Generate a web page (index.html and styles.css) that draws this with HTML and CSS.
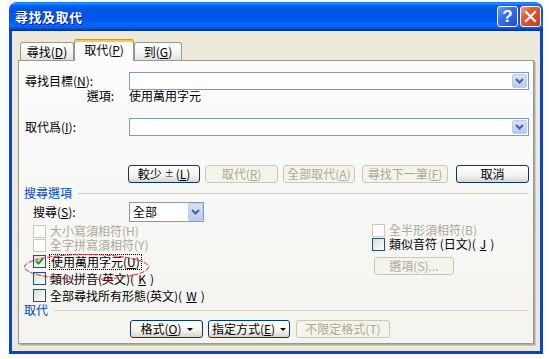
FILE: index.html
```html
<!DOCTYPE html>
<html>
<head>
    <meta charset="utf-8">
    <link rel="stylesheet" href="styles.css">
    <title>尋找及取代</title>
</head>
<body>
    <div class="window">
        <div class="titlebar">
            <span class="title">尋找及取代</span>
            <span class="cap-btn help">?</span>
            <span class="cap-btn close">
                <svg width="13" height="13" viewBox="0 0 13 13"><path d="M2 2 L11 11 M11 2 L2 11" stroke="#fff" stroke-width="2.2" stroke-linecap="square"/></svg>
            </span>
        </div>
        <div class="client">
            <div class="tabs">
                <div class="tab tab-find">尋找(<u>D</u>)</div>
                <div class="tab tab-active">取代(<u>P</u>)</div>
                <div class="tab tab-goto">到(<u>G</u>)</div>
            </div>
            <div class="panel">
                <div class="row row-combo">
                    <label class="label">尋找目標(<u>N</u>):</label>
                    <div class="combo">
                        <span class="drop-btn">
                            <svg width="9" height="6" viewBox="0 0 9 6"><path d="M1 1 L4.5 4.5 L8 1" fill="none" stroke="#4D6185" stroke-width="2"/></svg>
                        </span>
                    </div>
                </div>
                <div class="row row-info">
                    <span class="info-label">選項:</span>
                    <span>使用萬用字元</span>
                </div>
                <div class="row row-combo row-replace">
                    <label class="label">取代爲(<u>I</u>):</label>
                    <div class="combo">
                        <span class="drop-btn">
                            <svg width="9" height="6" viewBox="0 0 9 6"><path d="M1 1 L4.5 4.5 L8 1" fill="none" stroke="#4D6185" stroke-width="2"/></svg>
                        </span>
                    </div>
                </div>

                <div class="row row-buttons">
                    <button class="btn btn-less">較少 <span class="less-icon">±</span>(<u>L</u>)</button>
                    <button class="btn btn-replace" disabled>取代(<u>R</u>)</button>
                    <button class="btn btn-all" disabled>全部取代(<u>A</u>)</button>
                    <button class="btn btn-next" disabled>尋找下一筆(<u>F</u>)</button>
                    <button class="btn btn-cancel">取消</button>
                </div>

                <div class="group-title">搜尋選項</div>

                <div class="row row-search">
                    <label class="search-label">搜尋(<u>S</u>):</label>
                    <div class="select">
                        <span>全部</span>
                        <span class="drop-btn">
                            <svg width="9" height="6" viewBox="0 0 9 6"><path d="M1 1 L4.5 4.5 L8 1" fill="none" stroke="#4D6185" stroke-width="2"/></svg>
                        </span>
                    </div>
                </div>

                <div class="options">
                    <div class="col-left">
                        <div class="check check-tight disabled"><span class="box"></span>大小寫須相符(H)</div>
                        <div class="check check-tight disabled"><span class="box"></span>全字拼寫須相符(Y)</div>
                        <div class="check check-first">
                            <span class="box checked">
                                <svg width="11" height="11" viewBox="0 0 11 11"><path d="M2 5 L4.5 7.5 L9 2.5" fill="none" stroke="#21A121" stroke-width="2"/></svg>
                            </span>
                            <span class="focus">使用萬用字元(<u>U</u>)</span>
                        </div>
                        <div class="check"><span class="box"></span>類似拼音(英文)(<u>K</u>)</div>
                        <div class="check"><span class="box"></span>全部尋找所有形態(英文)(<u>W</u>)</div>
                    </div>
                    <div class="col-right">
                        <div class="check check-tight disabled"><span class="box"></span>全半形須相符(B)</div>
                        <div class="check check-tight"><span class="box"></span>類似音符 (日文)(<u>J</u>)</div>
                        <button class="btn btn-options" disabled>選項(S)...</button>
                    </div>
                </div>

                <div class="group-title group-replace">取代</div>

                <div class="row row-format">
                    <button class="btn btn-format">格式(<u>O</u>) <span class="caret"></span></button>
                    <button class="btn btn-special">指定方式(<u>E</u>) <span class="caret"></span></button>
                    <button class="btn btn-noformat" disabled>不限定格式(T)</button>
                </div>

                <svg class="mark" width="127" height="28" viewBox="0 0 127 28">
                    <ellipse cx="63.5" cy="14" rx="62" ry="12.5" fill="none" stroke="#E8202A" stroke-width="1" stroke-dasharray="5 1.5"/>
                </svg>
            </div>
        </div>
    </div>
</body>
</html>
```

FILE: styles.css
```css
* {
    box-sizing: border-box;
}

body {
    margin: 0;
    background: #FFF;
    font-family: "Noto Sans CJK TC", "Liberation Sans", sans-serif;
    font-size: 12px;
    line-height: 14px;
    color: #000;
}

.window {
    margin: 2px 0 0 9px;
    width: 534px;
    height: 352px;
    display: flex;
    flex-direction: column;
}

.titlebar {
    height: 29px;
    border-radius: 8px 8px 0 0;
    background: linear-gradient(to bottom, #0058EE 0%, #3593FF 4%, #288EFF 6%, #127DFF 8%, #036FFC 10%, #0262EE 14%, #0057E5 20%, #0054E3 24%, #0055EB 56%, #005BF5 66%, #026AFE 76%, #0062EF 86%, #0052D6 92%, #0040AB 94%, #003092 100%);
    display: flex;
    align-items: center;
    padding: 0 2px 0 6px;
    gap: 2px;
}

.title {
    flex: 1;
    color: #FFF;
    font-weight: bold;
    font-size: 13px;
    letter-spacing: 0.5px;
    text-shadow: 1px 1px #0F1089;
}

.cap-btn {
    width: 21px;
    height: 21px;
    border: 1px solid #FFF;
    border-radius: 3px;
    display: flex;
    align-items: center;
    justify-content: center;
    color: #FFF;
}

.help {
    background: linear-gradient(135deg, #6E9BF5 0%, #3A6EE8 40%, #1A4FD6 100%);
    font-family: "Liberation Sans", sans-serif;
    font-weight: bold;
    font-size: 17px;
}

.close {
    background: linear-gradient(135deg, #F2A38A 0%, #E35A34 35%, #CC3A15 100%);
}

.client {
    flex: 1;
    background: #ECE9D8;
    border: 3px solid #0842D8;
    border-top: 0;
    box-shadow: 0 1px 0 #001EA0;
}

.tabs {
    display: flex;
    align-items: flex-end;
    height: 21px;
    margin: 8px 0 0 8px;
}

.tab {
    height: 18px;
    border: 1px solid #919B9C;
    border-bottom: 0;
    border-radius: 3px 3px 0 0;
    background: linear-gradient(#FFFFFF, #F3F3EF 60%, #E4E3DA);
    display: flex;
    align-items: center;
    justify-content: center;
    padding-top: 1px;
}

.tab-find {
    width: 54px;
}

.tab-goto {
    width: 48px;
}

.tab-active {
    position: relative;
    z-index: 1;
    width: 60px;
    height: 22px;
    margin-bottom: -1px;
    background: #FCFCFE;
    border-top: 1px solid #E68B2C;
    box-shadow: inset 0 2px #FFC83C;
    padding-top: 0;
    padding-bottom: 2px;
}

.panel {
    position: relative;
    width: 516px;
    height: 284px;
    margin-left: 6px;
    border: 1px solid #919B9C;
    background: linear-gradient(#FCFCFE, #F4F3EE);
    box-shadow: 1px 1px 0 #A9A99F, 2px 2px 0 #D0CEBF;
    padding: 11px 0 0 6px;
}

.row {
    display: flex;
    align-items: center;
}

.row-combo {
    height: 18px;
}

.label {
    width: 104px;
}

.combo {
    position: relative;
    width: 400px;
    height: 18px;
    border: 1px solid #7F9DB9;
    background: #FFF;
}

.drop-btn {
    position: absolute;
    right: 1px;
    top: 1px;
    width: 15px;
    height: 14px;
    border: 1px solid #B9CBF3;
    border-radius: 2px;
    background: linear-gradient(#D6E2FD, #B7CAF6);
    display: flex;
    align-items: center;
    justify-content: center;
}

.row-info {
    height: 14px;
    margin-top: -1px;
}

.info-label {
    width: 104px;
    padding-right: 15px;
    text-align: right;
}

.row-replace {
    margin-top: 15px;
}

.row-buttons {
    height: 18px;
    margin-top: 29px;
    margin-left: 103px;
}

.btn {
    height: 18px;
    padding: 0;
    border: 1px solid #003C74;
    border-radius: 3px;
    background: linear-gradient(#FFFFFF, #F4F3EE 60%, #D9D5CA);
    font-family: inherit;
    font-size: 12px;
    line-height: 14px;
    color: #000;
    display: flex;
    align-items: center;
    justify-content: center;
}

.btn:disabled {
    border-color: #C9C7BA;
    background: #F5F4EA;
    color: #ACA899;
}

.btn-less {
    width: 72px;
}

.less-icon {
    font-size: 9px;
    margin: 0 2px 0 3px;
}

.btn-replace {
    width: 73px;
    margin-left: 5px;
}

.btn-all {
    width: 72px;
    margin-left: 5px;
}

.btn-next {
    width: 86px;
    margin-left: 7px;
}

.btn-cancel {
    width: 73px;
    margin-left: 8px;
}

.group-title {
    display: flex;
    align-items: center;
    gap: 6px;
    width: 504px;
    height: 14px;
    margin: 3px 0 0 -1px;
    color: #0046D5;
}

.group-title::after {
    content: "";
    flex: 1;
    height: 1px;
    background: #D0D0BF;
}

.row-search {
    height: 20px;
    margin-top: 2px;
}

.search-label {
    width: 104px;
    padding-left: 8px;
}

.select {
    position: relative;
    width: 75px;
    height: 20px;
    border: 1px solid #7F9DB9;
    background: #FFF;
    padding-left: 3px;
    display: flex;
    align-items: center;
}

.select .drop-btn {
    height: 18px;
    top: 0;
    right: 0;
}

.options {
    display: flex;
    height: 80px;
    margin-top: 1px;
}

.col-left {
    width: 347px;
    padding-left: 8px;
}

.check {
    display: flex;
    align-items: center;
    gap: 4px;
    height: 17px;
}

.check-tight {
    height: 14px;
}

.check-first {
    margin-top: 1px;
}

.col-left .check-tight:first-child {
    margin-top: 1px;
}

.box {
    width: 13px;
    height: 13px;
    border: 1px solid #1C5180;
    background: linear-gradient(135deg, #DCDCD7, #FFFFFF);
    display: flex;
    align-items: center;
    justify-content: center;
}

.disabled {
    color: #ACA899;
}

.disabled .box {
    border-color: #CAC8BB;
    background: #FFF;
}

.focus {
    outline: 1px dotted #000;
    padding: 0 1px;
}

.btn-options {
    width: 80px;
    margin: 6px 0 0 2px;
}

.group-replace {
    margin-top: 0;
}

.row-format {
    height: 18px;
    margin: 3px 0 0 105px;
}

.btn-format {
    width: 73px;
}

.btn-special {
    width: 82px;
    margin-left: 5px;
}

.btn-noformat {
    width: 94px;
    margin-left: 6px;
}

.caret {
    width: 0;
    height: 0;
    margin-left: 5px;
    border-left: 3px solid transparent;
    border-right: 3px solid transparent;
    border-top: 3px solid #000;
}

.mark {
    position: absolute;
    left: 4px;
    top: 192px;
}
```
